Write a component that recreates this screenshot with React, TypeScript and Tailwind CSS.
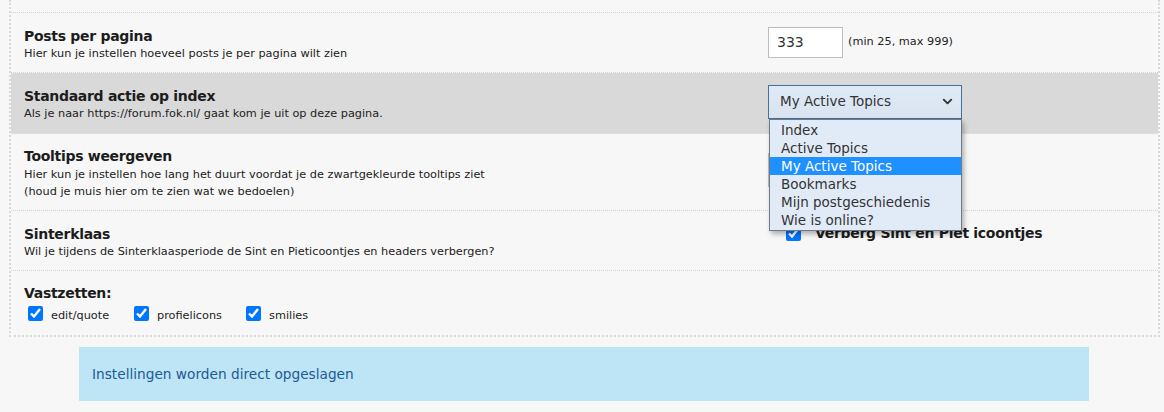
import { ChevronDown } from "lucide-react";

const options = [
  "Index",
  "Active Topics",
  "My Active Topics",
  "Bookmarks",
  "Mijn postgeschiedenis",
  "Wie is online?",
];

function Check({ label }: { label?: string }) {
  return (
    <label className="flex items-center">
      <input
        type="checkbox"
        defaultChecked
        className="w-[15px] h-[15px] m-0 accent-[#0075ff]"
      />
      {label && <span className="ml-[8px] text-[11.3px] text-[#222] mt-[6px]">{label}</span>}
    </label>
  );
}

export default function App() {
  return (
    <div className="w-[1164px] h-[412px] overflow-hidden bg-[#f7f7f7] text-[#222] font-['DejaVu_Sans',Verdana,sans-serif]">
      {/* Settings table */}
      <div className="ml-[9px] w-[1151px] border-2 border-t-0 border-dotted border-[#d9d9d9]">
        <div className="h-[13px] border-b border-dotted border-[#d4d4d4]" />

        {/* Posts per pagina */}
        <div className="h-[60px] flex items-center border-b border-dotted border-[#d4d4d4] pl-[13px]">
          <div className="w-[744px] mt-[1px]">
            <div className="text-[14px] tracking-[-0.3px] font-bold leading-[20px] text-[#1c1c1c]">Posts per pagina</div>
            <div className="text-[11.3px] leading-[15px]">Hier kun je instellen hoeveel posts je per pagina wilt zien</div>
          </div>
          <div className="flex items-center">
            <div className="w-[75px] h-[31px] border border-[#bdbdbd] bg-white flex items-center pl-[8px] text-[14px] text-[#333]">
              333
            </div>
            <span className="ml-[5px] text-[11.3px] text-[#222]">(min 25, max 999)</span>
          </div>
        </div>

        {/* Standaard actie op index */}
        <div className="h-[61px] flex items-center bg-[#d9d9d9] border-b border-dotted border-[#e6e6e6] pl-[13px]">
          <div className="w-[744px]">
            <div className="text-[14px] tracking-[-0.3px] font-bold leading-[20px] text-[#1c1c1c]">Standaard actie op index</div>
            <div className="text-[11.3px] leading-[15px]">Als je naar https://forum.fok.nl/ gaat kom je uit op deze pagina.</div>
          </div>
          <div className="relative -mt-[3px]">
            <div className="w-[194px] h-[34px] border border-[#44709a] bg-gradient-to-b from-[#dfeaf7] to-[#d9e4f0] flex items-center justify-between pl-[11px] pr-[6px] text-[13.5px] text-[#333]">
              <span>My Active Topics</span>
              <ChevronDown className="w-[15px] h-[15px] text-[#333]" strokeWidth={3} />
            </div>
            {/* Open dropdown list */}
            <div className="absolute left-[1px] top-[34px] z-10 w-[193px] border border-[#6f7a86] bg-[#e1ebf7] shadow-[2px_3px_5px_rgba(0,0,0,0.3)] py-[1px]">
              {options.map((o) => (
                <div
                  key={o}
                  className={
                    o === "My Active Topics"
                      ? "h-[18px] leading-[18px] pl-[11px] text-[13.5px] bg-[#1e90ff] text-white"
                      : "h-[18px] leading-[18px] pl-[11px] text-[13.5px] text-[#333]"
                  }
                >
                  {o}
                </div>
              ))}
            </div>
          </div>
        </div>

        {/* Tooltips weergeven */}
        <div className="h-[77px] flex items-center border-b border-dotted border-[#d4d4d4] pl-[13px]">
          <div className="w-[744px] mt-[2px]">
            <div className="text-[14px] tracking-[-0.3px] font-bold leading-[20px] text-[#1c1c1c]">Tooltips weergeven</div>
            <div className="text-[11.3px] leading-[17px]">
              Hier kun je instellen hoe lang het duurt voordat je de zwartgekleurde tooltips ziet
              <br />
              (houd je muis hier om te zien wat we bedoelen)
            </div>
          </div>
          <div className="w-[150px] h-[34px] border border-[#bdbdbd] bg-white -mt-[4px]" />
        </div>

        {/* Sinterklaas */}
        <div className="h-[60px] flex items-center border-b border-dotted border-[#d4d4d4] pl-[13px]">
          <div className="w-[744px] mt-[1px]">
            <div className="text-[14px] tracking-[-0.3px] font-bold leading-[20px] text-[#1c1c1c]">Sinterklaas</div>
            <div className="text-[11.3px] leading-[15px]">Wil je tijdens de Sinterklaasperiode de Sint en Pieticoontjes en headers verbergen?</div>
          </div>
          <div className="flex items-center self-start mt-[12px] pl-[18px]">
            <Check />
            <span className="ml-[14px] text-[14px] tracking-[-0.3px] font-bold text-[#1c1c1c]">Verberg Sint en Piet icoontjes</span>
          </div>
        </div>

        {/* Vastzetten */}
        <div className="h-[64px] flex items-center pl-[13px]">
          <div className="mt-[2px]">
            <div className="text-[14px] tracking-[-0.3px] font-bold leading-[20px] text-[#1c1c1c]">Vastzetten:</div>
            <div className="flex items-center pl-[4px] -mt-[1px]">
              <div className="w-[106px]"><Check label="edit/quote" /></div>
              <div className="w-[112px]"><Check label="profielicons" /></div>
              <Check label="smilies" />
            </div>
          </div>
        </div>
      </div>

      {/* Info */}
      <div className="ml-[79px] mt-[10px] w-[1010px] h-[54px] bg-[#bde5f6] flex items-center pl-[13px] text-[13.7px] text-[#1d5a94]">
        Instellingen worden direct opgeslagen
      </div>
    </div>
  );
}
